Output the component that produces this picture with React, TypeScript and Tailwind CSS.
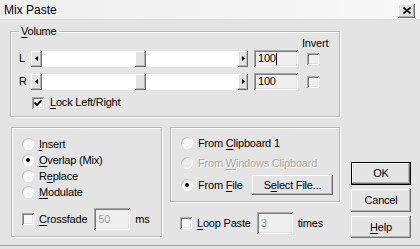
import React from "react";

const raised =
  "bg-[#e4e4e4] shadow-[inset_-1px_-1px_#6e6e6e,inset_1px_1px_#ffffff,inset_-2px_-2px_#b4b4b4]";
const sunken =
  "shadow-[inset_1px_1px_#a8a8a8,inset_-1px_-1px_#ffffff,inset_2px_2px_#7a7a7a,inset_-2px_-2px_#e4e4e4]";
const etched =
  "border border-[#b8b8b8] shadow-[inset_1px_1px_#ffffff,1px_1px_#ffffff]";

const Key = ({ c }: { c: string }) => <span className="underline underline-offset-2">{c}</span>;

const Arrow = ({ dir }: { dir: "l" | "r" }) => (
  <svg width="4" height="5" viewBox="0 0 4 5">
    {dir === "l" ? <path d="M3 0 L0 2.5 L3 5 Z" fill="#000" /> : <path d="M1 0 L4 2.5 L1 5 Z" fill="#000" />}
  </svg>
);

const Slider = () => (
  <div className="flex w-[217px] h-[16px]">
    <div className={`${raised} w-[11px] h-[16px] flex items-center justify-center`}>
      <Arrow dir="l" />
    </div>
    <div className="relative flex-1 bg-white">
      <div className={`${raised} absolute left-[93px] top-0 w-[11px] h-[16px]`} />
    </div>
    <div className={`${raised} w-[10px] h-[16px] flex items-center justify-center`}>
      <Arrow dir="r" />
    </div>
  </div>
);

const Check = ({ checked, bg = "bg-[#f7f7f7]" }: { checked?: boolean; bg?: string }) => (
  <div className={`${sunken} ${bg} w-[12px] h-[12px] flex items-center justify-center shrink-0`}>
    {checked && (
      <svg width="8" height="8" viewBox="0 0 8 8">
        <path d="M0.5 3.5 L3 6 L7.5 1.2" stroke="#000" strokeWidth="1.8" fill="none" />
      </svg>
    )}
  </div>
);

const Radio = ({ checked, disabled }: { checked?: boolean; disabled?: boolean }) => (
  <div
    className={`w-[12px] h-[12px] rounded-full shrink-0 flex items-center justify-center ${
      disabled ? "bg-[#ececec]" : "bg-[#f6f6f6]"
    } shadow-[inset_1px_1px_#c4c4c4,inset_-1px_-1px_#ffffff]`}
  >
    {checked && <div className="w-[4px] h-[4px] rounded-full bg-black" />}
  </div>
);

const Edit = ({ value, w, h, disabled, caret }: { value: string; w: string; h: string; disabled?: boolean; caret?: boolean }) => (
  <div className={`${sunken} bg-[#efefef] ${w} ${h} flex items-center pl-[4px] ${disabled ? "text-[#a4a4a4]" : "text-black"}`}>
    <span>{value}</span>
    {caret && <span className="w-px h-[12px] bg-black" />}
  </div>
);

const Button = ({ children, def, h = "h-[23px]" }: { children: React.ReactNode; def?: boolean; h?: string }) => (
  <div className={`${def ? "border border-black" : ""} w-[60px] ${h}`}>
    <div className={`${raised} w-full h-full flex items-center justify-center`}>{children}</div>
  </div>
);

export default function App() {
  return (
    <div
      className="w-[420px] h-[249px] bg-[#e4e4e4] text-[11px] leading-[13px] tracking-[-0.2px] whitespace-nowrap text-black overflow-hidden"
      style={{ fontFamily: '"Liberation Sans", Arial, sans-serif' }}
    >
      <div className="h-[246px] border-b border-[#a0a0a0] flex flex-col">
        <div className="h-[20px] shrink-0 bg-gradient-to-r from-[#efefef] to-[#f8f8f8] border-b border-[#dadada] flex items-center justify-between pl-[4px] pr-[5px]">
          <span className="text-[12px] tracking-normal pt-[2px]">Mix Paste</span>
          <div className={`${raised} w-[17px] h-[14px] mt-[2px] flex items-center justify-center`}>
            <svg width="8" height="7" viewBox="0 0 8 7">
              <path d="M0.5 0.5 L7.5 6.5 M7.5 0.5 L0.5 6.5" stroke="#000" strokeWidth="1.6" />
            </svg>
          </div>
        </div>

        <div className="flex">
          <div className="pl-[10px] pt-[11px] w-[340px] shrink-0">
            <div className={`${etched} relative h-[86px] pl-[8px] pt-[4px]`}>
              <span className="absolute -top-[7px] left-[8px] px-[2px] bg-[#e4e4e4]">
                <Key c="V" />olume
              </span>
              <div className="h-[14px] flex items-center pl-[283px]">Invert</div>
              <div className="flex items-center h-[17px]">
                <span className="w-[12px]">L</span>
                <Slider />
                <div className="ml-[6px]">
                  <Edit value="100" w="w-[44px]" h="h-[17px]" caret />
                </div>
                <div className="ml-[9px]">
                  <Check bg="bg-[#efefef]" />
                </div>
              </div>
              <div className="flex items-center h-[17px] mt-[6px]">
                <span className="w-[12px]">R</span>
                <Slider />
                <div className="ml-[6px]">
                  <Edit value="100" w="w-[44px]" h="h-[17px]" />
                </div>
                <div className="ml-[9px]">
                  <Check bg="bg-[#efefef]" />
                </div>
              </div>
              <div className="flex items-center h-[13px] mt-[6px] pl-[13px] gap-[6px]">
                <Check checked />
                <span>
                  <Key c="L" />ock Left/Right
                </span>
              </div>
            </div>

            <div className="flex mt-[10px]">
              <div className={`${etched} ml-[1px] w-[151px] h-[110px] pl-[10px] pt-[8px]`}>
                {[
                  ["I", "nsert", false],
                  ["O", "verlap (Mix)", true],
                  ["R", "eplace", false],
                  ["M", "odulate", false],
                ].map(([k, rest, on], i) => (
                  <div key={i} className="flex items-center h-[16px] gap-[5px]">
                    <Radio checked={on as boolean} />
                    <span>
                      {k === "R" ? (
                        <>
                          R<Key c="e" />place
                        </>
                      ) : (
                        <>
                          <Key c={k as string} />
                          {rest as string}
                        </>
                      )}
                    </span>
                  </div>
                ))}
                <div className="flex items-center h-[22px] mt-[8px]">
                  <Check />
                  <span className="ml-[5px]">
                    <Key c="C" />rossfade
                  </span>
                  <div className="ml-[7px]">
                    <Edit value="50" w="w-[36px]" h="h-[22px]" disabled />
                  </div>
                  <span className="ml-[5px]">ms</span>
                </div>
              </div>

              <div className="ml-[8px] w-[170px]">
                <div className={`${etched} h-[75px] pl-[10px] pr-[6px] pt-[7px]`}>
                  <div className="flex items-center h-[16px] gap-[5px]">
                    <Radio />
                    <span>
                      From <Key c="C" />lipboard 1
                    </span>
                  </div>
                  <div className="flex items-center h-[16px] mt-[4px] gap-[5px]">
                    <Radio disabled />
                    <span className="text-[#a8a8a8] [text-shadow:1px_1px_#ffffff]">
                      From <Key c="W" />indows Clipboard
                    </span>
                  </div>
                  <div className="flex items-center h-[20px] mt-[4px] gap-[5px]">
                    <Radio checked />
                    <span>
                      From <Key c="F" />ile
                    </span>
                    <div className={`${raised} ml-auto w-[81px] h-[20px] flex items-center justify-center`}>
                      <span>
                        S<Key c="e" />lect File...
                      </span>
                    </div>
                  </div>
                </div>
                <div className="flex items-center h-[22px] mt-[10px] pl-[10px]">
                  <Check />
                  <span className="ml-[5px]">
                    <Key c="L" />oop Paste
                  </span>
                  <div className="ml-[6px]">
                    <Edit value="3" w="w-[36px]" h="h-[22px]" disabled />
                  </div>
                  <span className="ml-[5px]">times</span>
                </div>
              </div>
            </div>
          </div>

          <div className="ml-[11px] pt-[142px] flex flex-col gap-[4px]">
            <Button def>OK</Button>
            <Button>Cancel</Button>
            <Button h="h-[22px]">
              <span>
                <Key c="H" />elp
              </span>
            </Button>
          </div>
        </div>
      </div>
    </div>
  );
}
